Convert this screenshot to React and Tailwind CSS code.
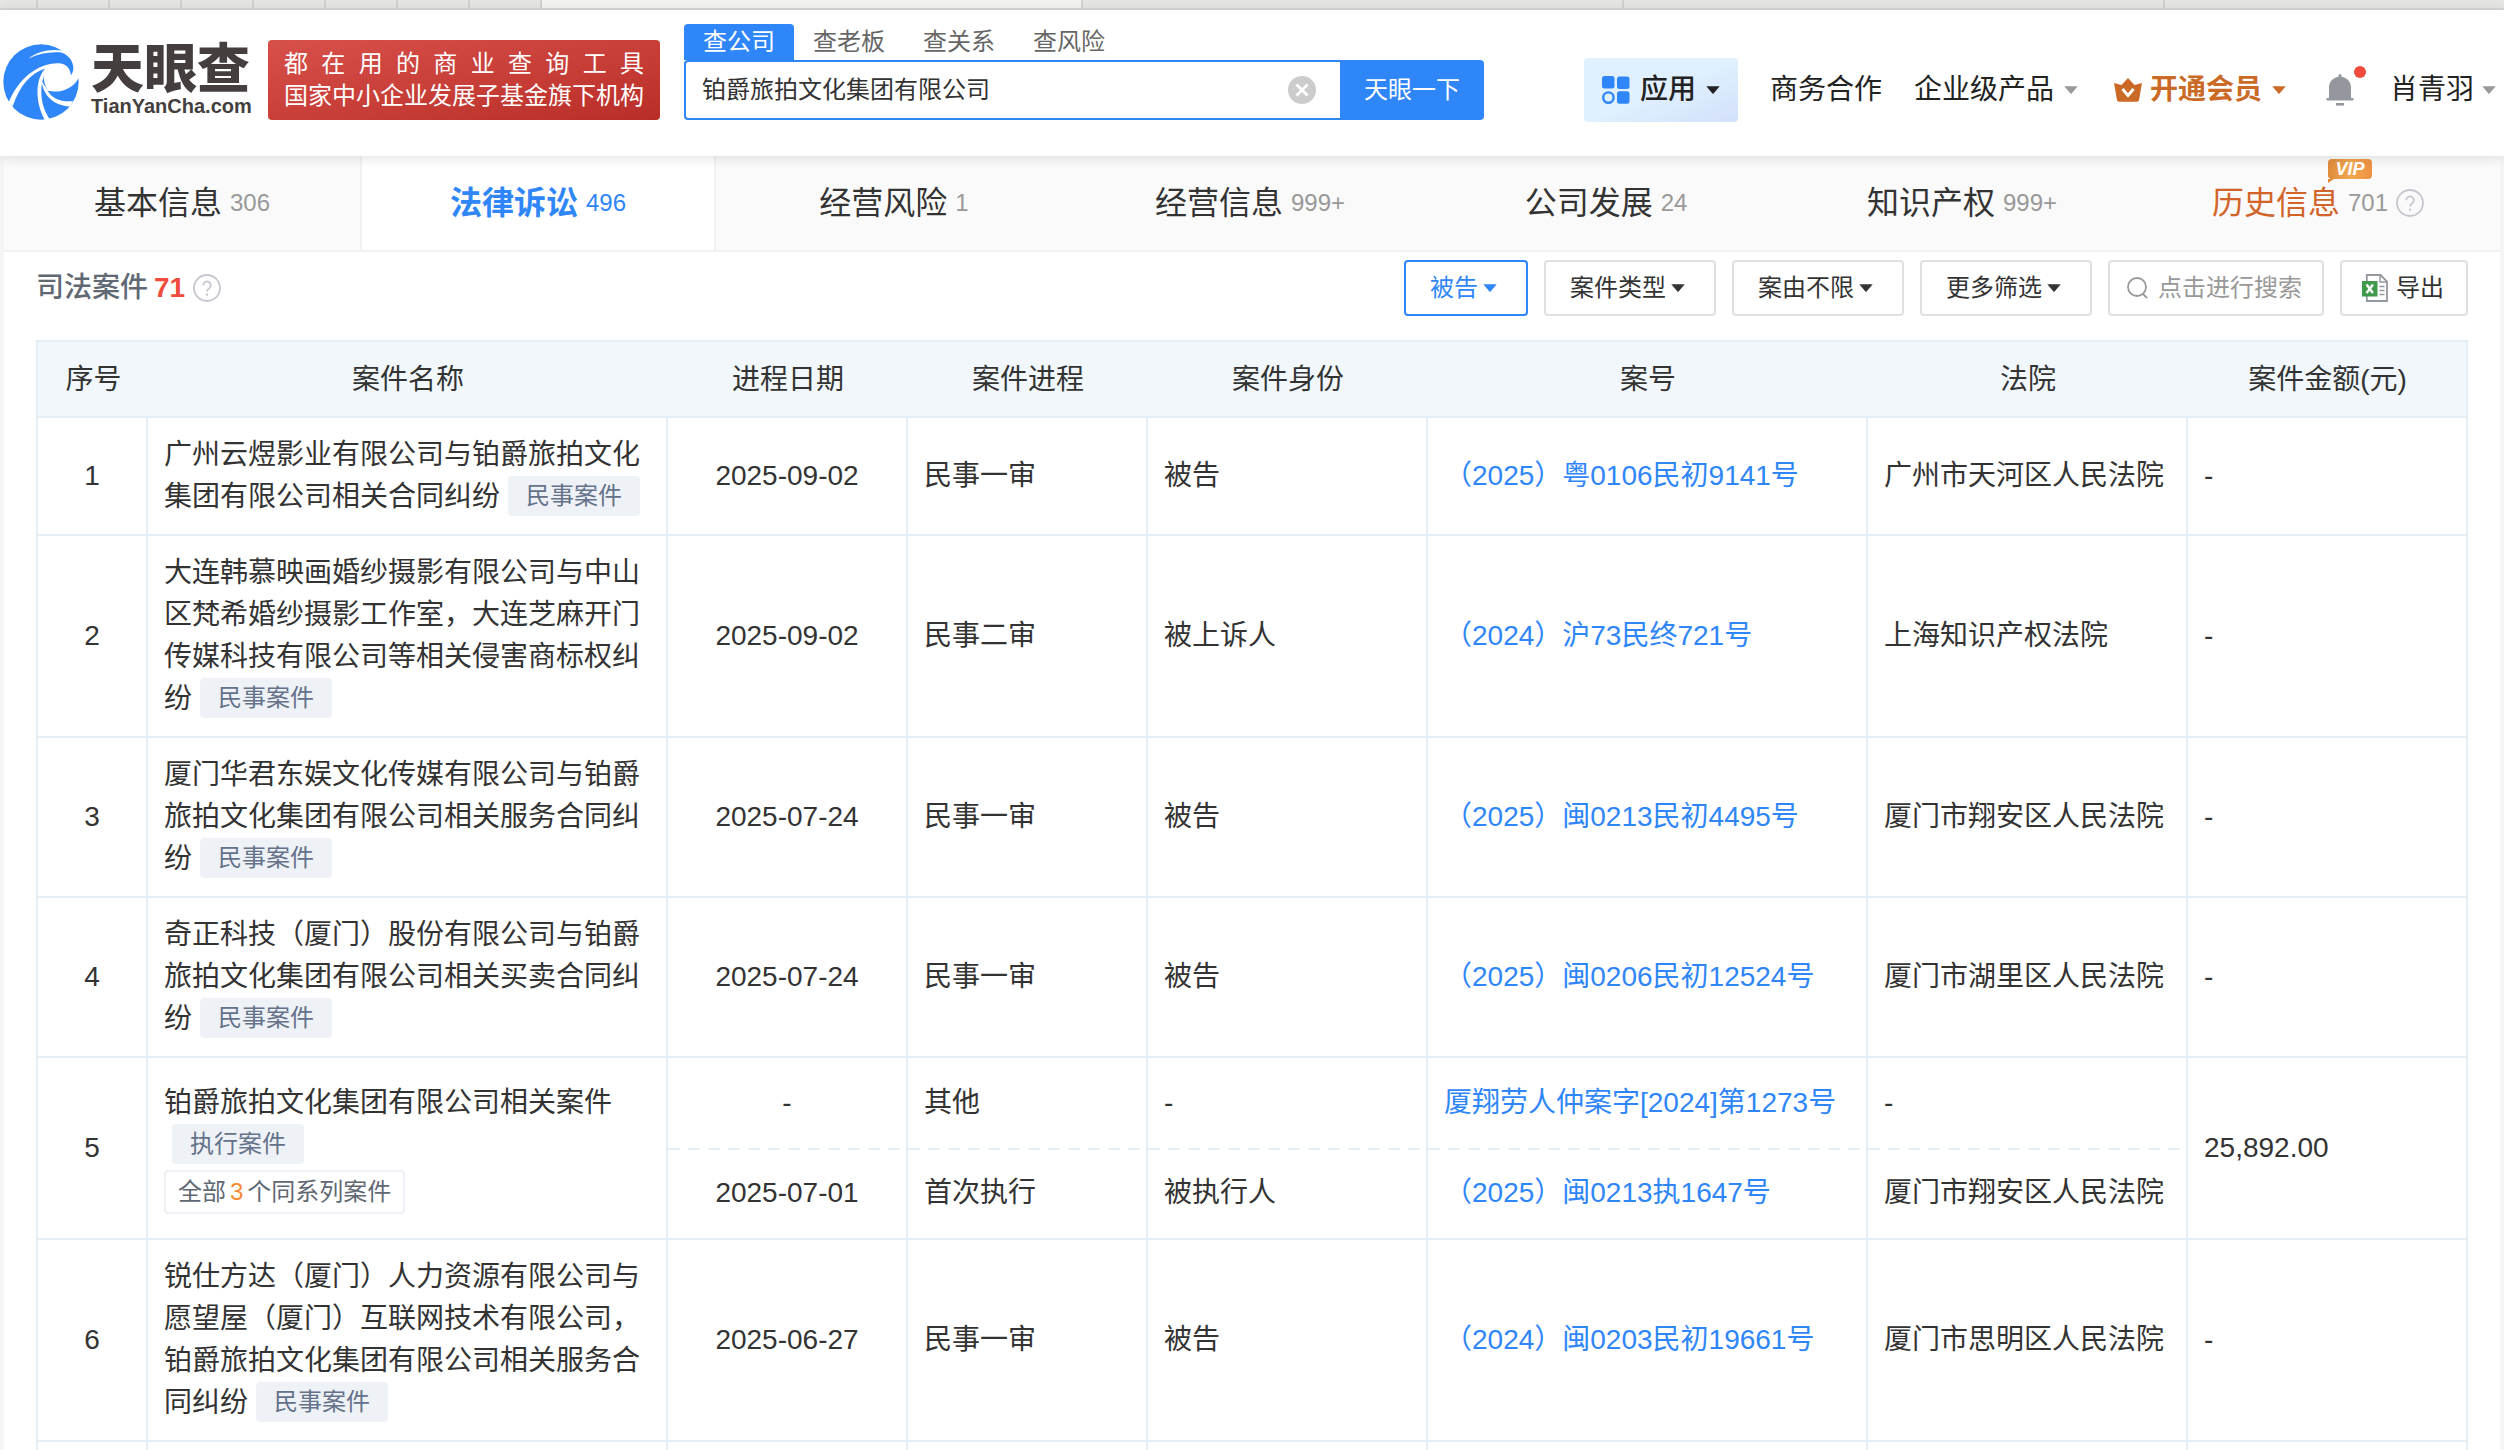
import React from "react";

const BROWSER_TABS = [
  "w-[38px]",
  "w-[72px]",
  "w-[72px]",
  "w-[72px]",
  "w-[72px]",
  "w-[72px]",
  "w-[72px]",
  "w-[72px]",
  "w-[541px] bg-[#f2f2f0]",
  "w-[541px]",
  "w-[541px]",
];

const SEARCH_TABS = ["查公司", "查老板", "查关系", "查风险"];

const SECTIONS = [
  { name: "基本信息", count: "306" },
  { name: "法律诉讼", count: "496", active: true },
  { name: "经营风险", count: "1" },
  { name: "经营信息", count: "999+" },
  { name: "公司发展", count: "24" },
  { name: "知识产权", count: "999+" },
  { name: "历史信息", count: "701", vip: true },
];

const FILTERS = ["案件类型", "案由不限", "更多筛选"];

const COLUMNS = [
  { title: "序号", width: "w-[110px]" },
  { title: "案件名称", width: "w-auto" },
  { title: "进程日期", width: "w-[240px]" },
  { title: "案件进程", width: "w-[240px]" },
  { title: "案件身份", width: "w-[280px]" },
  { title: "案号", width: "w-[440px]" },
  { title: "法院", width: "w-[320px]" },
  { title: "案件金额(元)", width: "w-[280px]" },
];

const CASES = [
  {
    name: "广州云煜影业有限公司与铂爵旅拍文化集团有限公司相关合同纠纷",
    tag: "民事案件",
    amount: "-",
    steps: [["2025-09-02", "民事一审", "被告", "（2025）粤0106民初9141号", "广州市天河区人民法院"]],
  },
  {
    name: "大连韩慕映画婚纱摄影有限公司与中山区梵希婚纱摄影工作室，大连芝麻开门传媒科技有限公司等相关侵害商标权纠纷",
    tag: "民事案件",
    amount: "-",
    steps: [["2025-09-02", "民事二审", "被上诉人", "（2024）沪73民终721号", "上海知识产权法院"]],
  },
  {
    name: "厦门华君东娱文化传媒有限公司与铂爵旅拍文化集团有限公司相关服务合同纠纷",
    tag: "民事案件",
    amount: "-",
    steps: [["2025-07-24", "民事一审", "被告", "（2025）闽0213民初4495号", "厦门市翔安区人民法院"]],
  },
  {
    name: "奇正科技（厦门）股份有限公司与铂爵旅拍文化集团有限公司相关买卖合同纠纷",
    tag: "民事案件",
    amount: "-",
    steps: [["2025-07-24", "民事一审", "被告", "（2025）闽0206民初12524号", "厦门市湖里区人民法院"]],
  },
  {
    name: "铂爵旅拍文化集团有限公司相关案件",
    tag: "执行案件",
    series: 3,
    amount: "25,892.00",
    steps: [
      ["-", "其他", "-", "厦翔劳人仲案字[2024]第1273号", "-"],
      ["2025-07-01", "首次执行", "被执行人", "（2025）闽0213执1647号", "厦门市翔安区人民法院"],
    ],
  },
  {
    name: "锐仕方达（厦门）人力资源有限公司与愿望屋（厦门）互联网技术有限公司，铂爵旅拍文化集团有限公司相关服务合同纠纷",
    tag: "民事案件",
    amount: "-",
    steps: [["2025-06-27", "民事一审", "被告", "（2024）闽0203民初19661号", "厦门市思明区人民法院"]],
  },
];

const Caret = ({ className }) => (
  <svg viewBox="0 0 14 8" className={`w-[14px] h-2 shrink-0 ${className || ""}`} fill="currentColor">
    <path d="M0.3 0.3h13.4L7.600 7.400a0.900 0.900 0 0 1-1.200 0z" />
  </svg>
);

const HelpIcon = () => (
  <svg viewBox="0 0 28 28" className="w-7 h-7 shrink-0 text-[#c4c8ce]" fill="none" stroke="currentColor">
    <circle cx="14" cy="14" r="13" strokeWidth="1.8" />
    <path d="M10.2 11.2a3.800 3.800 0 1 1 5.800 3.200c-1.300.8-2 1.500-2 3.200" strokeWidth="1.8" />
    <path d="M14 19.600v2.200" strokeWidth="1.900" />
  </svg>
);

const LogoMark = () => (
  <svg viewBox="13 25 226 226" className="w-[76px] h-[76px] shrink-0">
    <circle cx="126" cy="138" r="112" fill="#2f86f8" />
    <g fill="#fff">
      <path d="M88 69C115 46 155 38 194 45L190 51C158 47 122 52 88 69z" />
      <path d="M188 38L250 40V125H238C222 158 185 172 146 164C134 140 130 118 138 98C95 112 62 150 42 210L30 198C58 130 115 80 180 82C203 84 214 100 215 118C228 104 226 66 188 50z" />
      <path d="M138 98C110 130 106 195 138 252L153 250C127 215 120 165 134 122z" />
      <path d="M128 135C133 180 165 208 212 211L222 195C184 198 156 186 144 160z" />
    </g>
  </svg>
);

const SiteHeader = () => (
  <header className="relative z-10 flex h-[146px] items-start bg-white shadow-[0_2px_12px_rgba(0,0,0,0.12)]">
    <a href="#" className="flex items-center gap-3 pt-[34px] pl-[3px]">
      <LogoMark />
      <span className="flex w-[160px] flex-col text-[#443f3e]">
        <span className="text-[53px] leading-[48px] font-black whitespace-nowrap">天眼查</span>
        <span className="text-[20px] leading-6 font-bold">TianYanCha.com</span>
      </span>
    </a>

    <div className="mt-[30px] ml-[17px] w-[392px] shrink-0 rounded bg-linear-to-br from-[#d8504a] to-[#b92d27] px-4 py-2 text-2xl leading-8 text-white">
      <p className="[text-align-last:justify]">都在用的商业查询工具</p>
      <p className="whitespace-nowrap">国家中小企业发展子基金旗下机构</p>
    </div>

    <form className="mt-[14px] ml-6 w-[800px] shrink-0 text-2xl" onSubmit={(e) => e.preventDefault()}>
      <div className="flex">
        {SEARCH_TABS.map((tab, i) => (
          <button
            key={tab}
            type="button"
            className={`h-9 w-[110px] rounded-t leading-9 ${i === 0 ? "bg-[#2f86f8] text-white" : "text-[#666]"}`}
          >
            {tab}
          </button>
        ))}
      </div>
      <div className="flex h-[60px]">
        <div className="flex flex-1 items-center rounded-l border-2 border-r-0 border-[#2f86f8] pr-6 pl-4">
          <input
            aria-label="搜索公司"
            className="min-w-0 flex-1 text-[#333] outline-none"
            defaultValue="铂爵旅拍文化集团有限公司"
          />
          <button type="button" aria-label="清空">
            <svg viewBox="0 0 28 28" className="w-7 h-7">
              <circle cx="14" cy="14" r="14" fill="#ccc" />
              <path d="M8.500 8.500l11 11M19.500 8.500l-11 11" stroke="#fff" strokeWidth="2.800" />
            </svg>
          </button>
        </div>
        <button type="submit" className="w-36 rounded-r bg-[#2f86f8] text-white">
          天眼一下
        </button>
      </div>
    </form>

    <nav className="mt-12 ml-auto flex h-16 items-center pr-2 text-[28px] text-[#222] whitespace-nowrap">
      <button className="flex h-16 items-center rounded bg-linear-to-br from-[#e0f0fe] from-50% to-[#d3e0fb] px-[18px] font-medium">
        <svg viewBox="0 0 28 28" className="mr-2.5 w-7 h-7" fill="#2f86f8">
          <rect x="0" y="0" width="12.500" height="12.500" rx="2.500" />
          <rect x="15" y="0.500" width="12.500" height="12.500" rx="2.500" />
          <rect x="15" y="15.200" width="12.500" height="12.500" rx="2.500" />
          <circle cx="6.400" cy="21.600" r="5.200" fill="none" stroke="#2f86f8" strokeWidth="2.400" />
        </svg>
        应用
        <Caret className="ml-2.5" />
      </button>
      <a href="#" className="ml-8">商务合作</a>
      <button className="ml-8 flex items-center">
        企业级产品
        <Caret className="ml-2.5 text-[#999]" />
      </button>
      <button className="ml-9 flex items-center font-bold text-[#cb6a26]">
        <svg viewBox="0 0 28 24" className="mr-2 h-6 w-7" fill="currentColor">
          <path d="M14 0l6.500 7L28 5l-3 17a2 2 0 0 1-2 1.700H5A2 2 0 0 1 3 22L0 5l7.500 2z" />
          <path d="M8.500 11l5.500 6.500L19.500 11" fill="none" stroke="#fff" strokeWidth="3" />
        </svg>
        开通会员
        <Caret className="ml-2.5" />
      </button>
      <button aria-label="消息" className="relative ml-10">
        <svg viewBox="0 0 28 32" className="h-8 w-7" fill="#94989e">
          <path d="M14 0a1.500 1.500 0 0 1 1.500 1.500v1.300c5.500.7 9.500 5 9.500 10.700V24h2.500v2.500H0.500V24H3V13.500C3 7.800 7 3.500 12.500 2.800V1.500A1.500 1.500 0 0 1 14 0z" />
          <rect x="10" y="29" width="8" height="2.600" />
        </svg>
        <span className="absolute -top-2 -right-3 h-3 w-3 rounded-full bg-[#f04b3c]" />
      </button>
      <button className="ml-9 flex items-center">
        肖青羽
        <Caret className="ml-2 text-[#999]" />
      </button>
    </nav>
  </header>
);

const SectionTabs = () => (
  <nav className="grid h-24 grid-cols-7 border-b-2 border-[#f2f2f2] bg-[#fafafa] pr-1">
    {SECTIONS.map((s) => (
      <a
        key={s.name}
        href="#"
        className={`flex items-center justify-center gap-2 text-[32px] ${
          s.active
            ? "border-x-2 border-[#f2f2f2] bg-white font-bold text-[#2f86f8]"
            : s.vip
            ? "text-[#d2642a]"
            : "text-[#333]"
        }`}
      >
        <span className="relative">
          {s.name}
          {s.vip && (
            <span className="absolute -top-5 -right-8 h-5 w-11 rounded-sm bg-linear-to-r from-[#e08a3a] via-[#f0a850] to-[#ee9142] text-center text-lg leading-5 font-bold text-white italic after:absolute after:top-full after:left-0 after:border-t-4 after:border-r-6 after:border-t-[#e08a3a] after:border-r-transparent">
              VIP
            </span>
          )}
        </span>
        <span className={`text-2xl font-normal ${s.active ? "" : "text-[#999]"}`}>{s.count}</span>
        {s.vip && <HelpIcon />}
      </a>
    ))}
  </nav>
);

const Toolbar = () => (
  <div className="flex items-center gap-4 pt-2 text-2xl text-[#333]">
    <h2 className="mr-auto flex items-center text-[28px] font-medium text-[#5f6873]">
      司法案件
      <span className="ml-1.5 font-bold text-[#f04b3c]">71</span>
      <span className="ml-2">
        <HelpIcon />
      </span>
    </h2>
    <button className="flex h-14 items-center rounded border-2 border-[#2f86f8] pr-[29px] pl-6 text-[#2f86f8]">
      被告
      <Caret className="ml-[5px]" />
    </button>
    {FILTERS.map((f) => (
      <button key={f} className="flex h-14 items-center rounded border-2 border-[#e0e0e0] pr-[29px] pl-6">
        {f}
        <Caret className="ml-[5px]" />
      </button>
    ))}
    <label className="flex h-14 w-[216px] items-center rounded border-2 border-[#e0e0e0] pl-4">
      <svg viewBox="0 0 24 24" className="mr-2 w-6 h-6 shrink-0" fill="none" stroke="#999" strokeWidth="1.800">
        <circle cx="11" cy="11" r="9" />
        <path d="M17 18l4 4" />
      </svg>
      <input aria-label="搜索案件" placeholder="点击进行搜索" className="w-full min-w-0 outline-none placeholder:text-[#999]" />
    </label>
    <button className="flex h-14 w-32 items-center rounded border-2 border-[#e0e0e0] pl-5">
      <svg viewBox="0 0 26 28" className="mr-2 w-[26px] h-7" fill="none">
        <path d="M4.800 1h13.700L25 7.500V27H4.800z" stroke="#94989e" strokeWidth="1.800" />
        <path d="M18 1v7h7M17.500 12.500h5M17.500 16.500h5M17.500 20.500h5" stroke="#94989e" strokeWidth="1.500" />
        <rect x="0" y="7" width="15.500" height="15.500" fill="#3f9a4b" />
        <path d="M4.600 10.500l6.300 8.500M10.900 10.500L4.600 19" stroke="#fff" strokeWidth="2.400" />
      </svg>
      导出
    </button>
  </div>
);

const cell = "border-2 border-[#e4eef6] px-4";
// steps of one case are parted by a dashed rule, not by a full border
const firstStep = "border-2 border-b-0 border-[#e4eef6] px-4";
const nextStep =
  "border-2 border-t-0 border-[#e4eef6] px-4 bg-[repeating-linear-gradient(90deg,#e4eef6_0_12px,transparent_12px_20px)] bg-[length:100%_2px] bg-no-repeat";

const StepCells = ({ step, className }) => (
  <>
    <td className={`${className} text-center`}>{step[0]}</td>
    <td className={className}>{step[1]}</td>
    <td className={className}>{step[2]}</td>
    <td className={className}>
      <a href="#" className="text-[#2f86f8]">{step[3]}</a>
    </td>
    <td className={className}>{step[4]}</td>
  </>
);

const CaseRows = ({ item, index }) => {
  const span = item.steps.length;

  return (
    <>
      <tr className={span > 1 ? "h-[91px]" : ""}>
        <td rowSpan={span} className={`${cell} text-center`}>{index}</td>
        <td rowSpan={span} className={`${cell} py-4`}>
          {item.name}
          <span className="ml-2 inline-block h-10 rounded bg-[#eef1f6] px-[18px] align-top text-2xl leading-10 text-[#64728a]">
            {item.tag}
          </span>
          {item.series && (
            <button className="mt-1 block h-11 rounded border-2 border-[#eef1f6] px-3 text-2xl text-[#5f6873]">
              全部<span className="mx-1 text-[#f58a34]">{item.series}</span>个同系列案件
            </button>
          )}
        </td>
        <StepCells step={item.steps[0]} className={span > 1 ? firstStep : cell} />
        <td rowSpan={span} className={cell}>{item.amount}</td>
      </tr>
      {item.steps.slice(1).map((step) => (
        <tr key={step[3]} className="h-[91px]">
          <StepCells step={step} className={nextStep} />
        </tr>
      ))}
    </>
  );
};

const CaseTable = () => (
  <table className="mt-6 w-full table-fixed border-collapse text-[28px] leading-[42px] text-[#333]">
    <thead>
      <tr className="h-[76px] bg-[#f1f7fb]">
        {COLUMNS.map((c) => (
          <th key={c.title} className={`${c.width} border-y-2 border-[#e4eef6] pt-0.5 pl-0.5 font-normal first:border-l-2 last:border-r-2`}>
            {c.title}
          </th>
        ))}
      </tr>
    </thead>
    <tbody>
      {CASES.map((item, i) => (
        <CaseRows key={item.name} item={item} index={i + 1} />
      ))}
      <tr className="h-[118px]">
        {COLUMNS.map((c) => (
          <td key={c.title} className={cell} />
        ))}
      </tr>
    </tbody>
  </table>
);

export default function App() {
  return (
    <div className="h-screen overflow-hidden bg-[#f5f5f5] font-['Liberation_Sans','Noto_Sans_CJK_SC',sans-serif]">
      <div className="flex h-[10px] border-b-2 border-[#d6d6d6] bg-[#e5e5e4]">
        {BROWSER_TABS.map((tab, i) => (
          <div key={i} className={`${tab} shrink-0 border-r-2 border-[#d0d0d0]`} />
        ))}
      </div>
      <SiteHeader />
      <main className="mx-1 bg-white">
        <SectionTabs />
        <div className="px-8">
          <Toolbar />
          <CaseTable />
        </div>
      </main>
    </div>
  );
}
